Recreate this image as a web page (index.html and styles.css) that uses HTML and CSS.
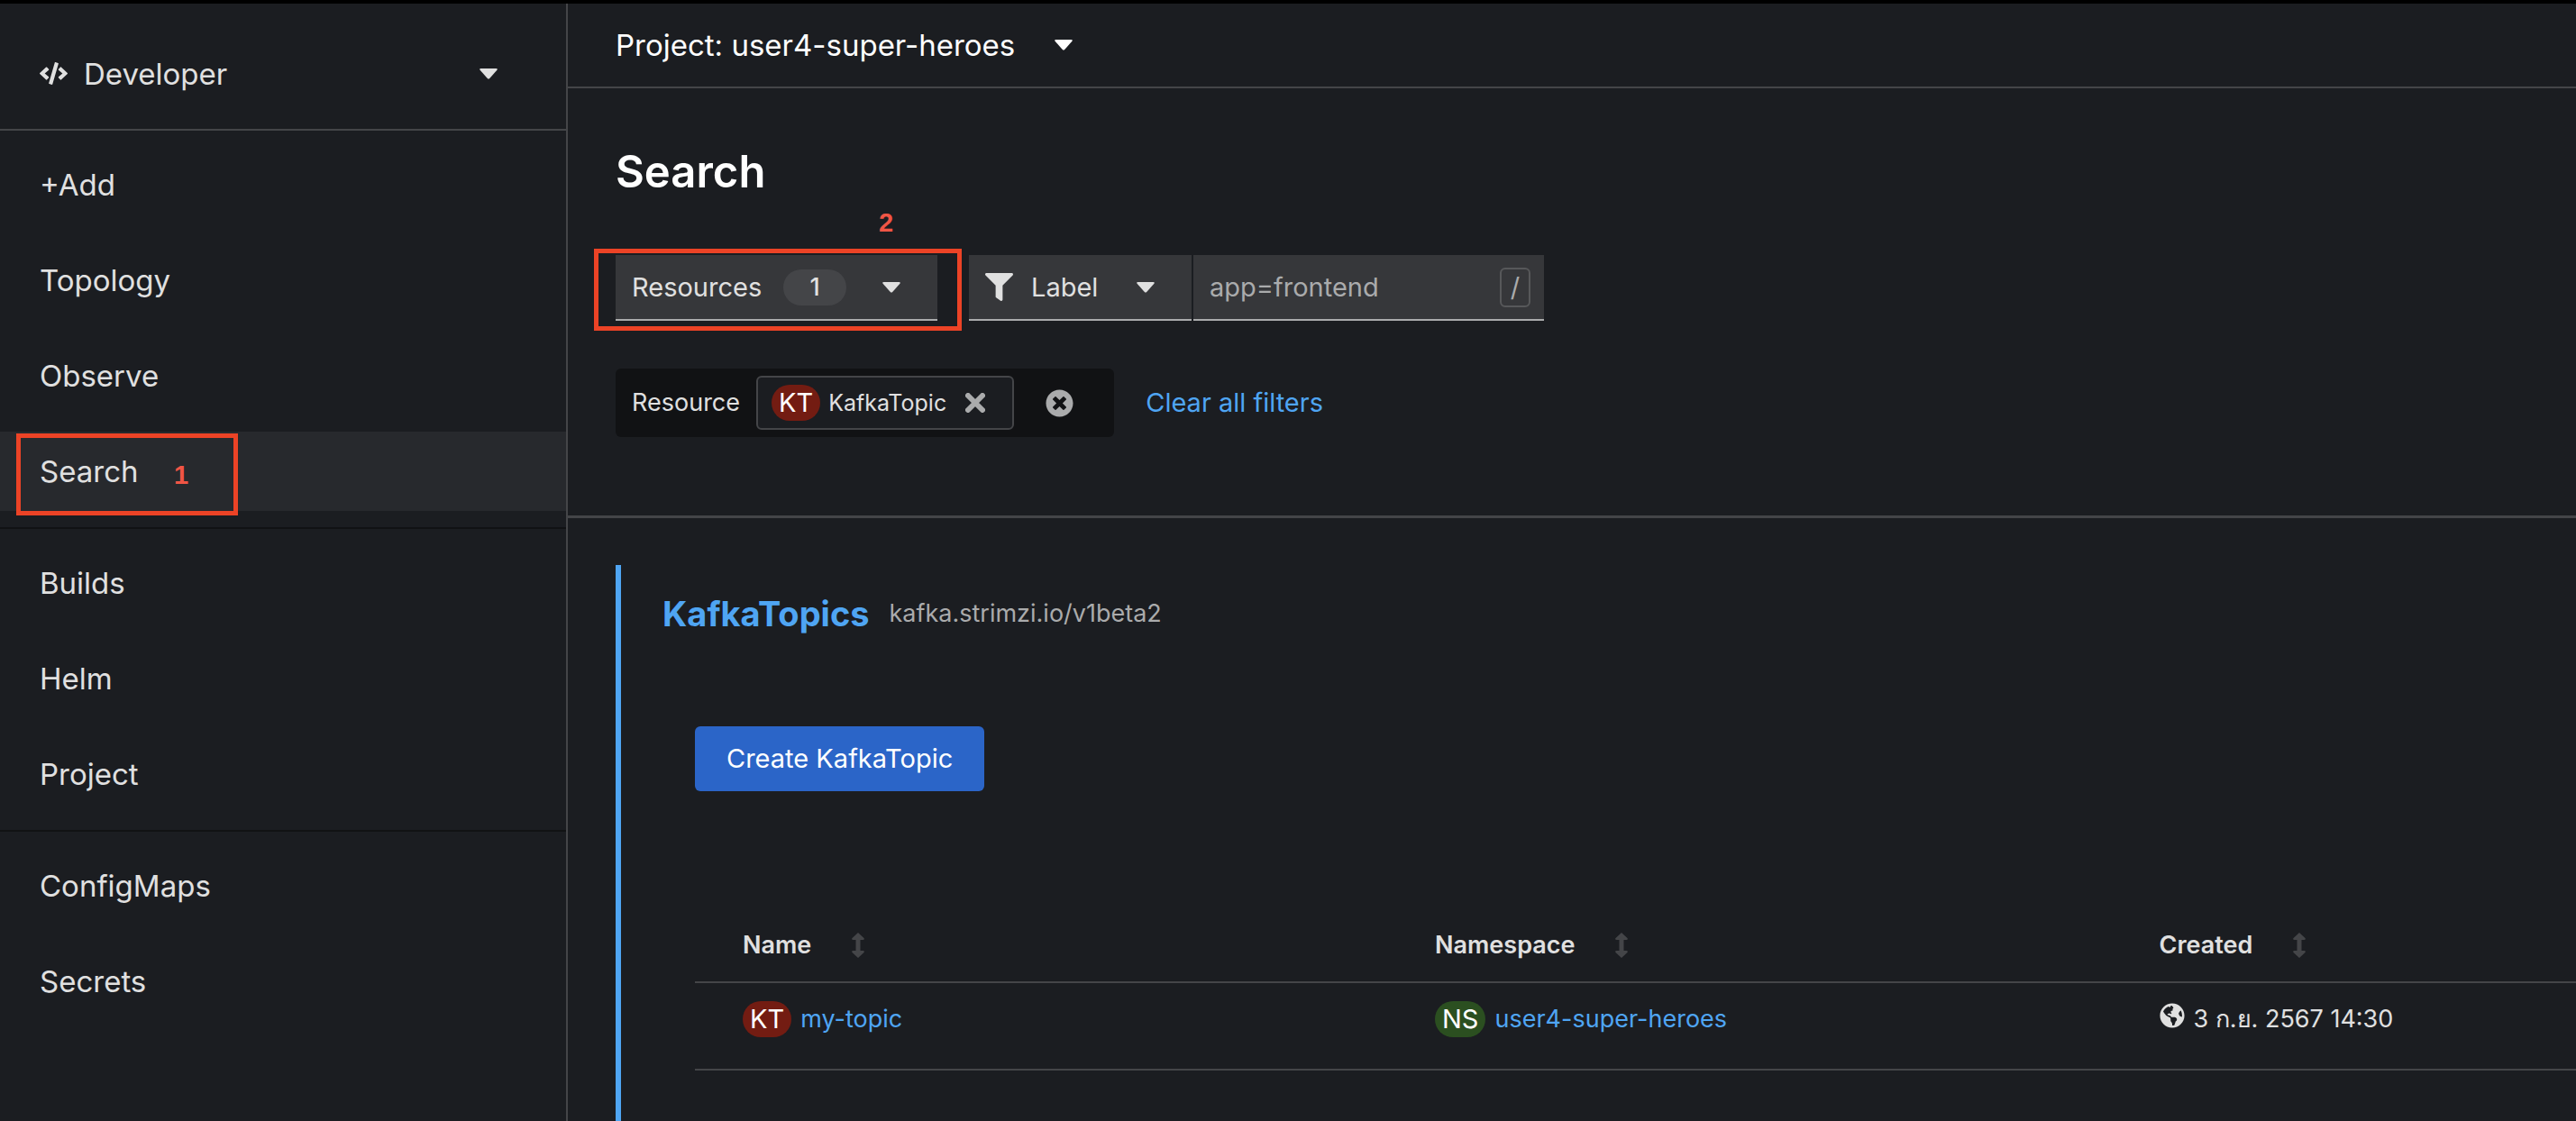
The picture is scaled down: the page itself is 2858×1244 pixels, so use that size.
FILE: index.html
```html
<!DOCTYPE html>
<html lang="en">
<head>
<meta charset="utf-8">
<title>Search</title>
<link rel="stylesheet" href="styles.css">
</head>
<body>
<div class="app">
  <aside class="sidebar">
    <button class="perspective" type="button">
      <svg class="icon-code" viewBox="0 0 640 512" aria-hidden="true"><path d="M278.900 511.500l-61-17.700c-6.400-1.800-10-8.500-8.200-14.900L346.200 8.700c1.800-6.400 8.500-10 14.900-8.200l61 17.700c6.400 1.800 10 8.500 8.200 14.900L293.800 503.300c-1.900 6.400-8.500 10.100-14.900 8.200zm-114-112.200l43.500-46.400c4.600-4.900 4.300-12.700-.8-17.200L117 256l90.600-79.700c5.100-4.500 5.500-12.300.8-17.200l-43.500-46.400c-4.500-4.800-12.100-5.100-17-.5L3.800 247.200c-5.100 4.700-5.100 12.800 0 17.500l144.100 135.100c4.900 4.600 12.500 4.400 17-.5zm327.200.6l144.100-135.100c5.100-4.700 5.100-12.800 0-17.500L492.100 112.100c-4.800-4.500-12.400-4.300-17 .5L431.600 159c-4.600 4.900-4.300 12.700.8 17.200L523 256l-90.600 79.700c-5.100 4.500-5.500 12.300-.8 17.200l43.500 46.400c4.500 4.900 12.100 5.100 17 .6z"/></svg>
      <span class="perspective-name">Developer</span>
      <svg class="caret" viewBox="0 0 20 12" aria-hidden="true"><path d="M1.500 0h17q2 0 .9 1.800L11.200 11q-1.200 1.200-2.400 0L.6 1.800Q-.5 0 1.500 0z"/></svg>
    </button>
    <nav>
      <ul class="nav-group">
        <li><a class="nav-link" href="#add">+Add</a></li>
        <li><a class="nav-link" href="#topology">Topology</a></li>
        <li><a class="nav-link" href="#observe">Observe</a></li>
        <li><a class="nav-link current" href="#search" aria-current="page">Search</a><span class="mark mark-nav"><span>1</span></span></li>
      </ul>
      <ul class="nav-group">
        <li><a class="nav-link" href="#builds">Builds</a></li>
        <li><a class="nav-link" href="#helm">Helm</a></li>
        <li><a class="nav-link" href="#project">Project</a></li>
      </ul>
      <ul class="nav-group">
        <li><a class="nav-link" href="#configmaps">ConfigMaps</a></li>
        <li><a class="nav-link" href="#secrets">Secrets</a></li>
      </ul>
    </nav>
  </aside>

  <main class="content">
    <div class="project-bar">
      <button class="project-toggle" type="button">Project: user4-super-heroes
        <svg class="caret" viewBox="0 0 20 12" aria-hidden="true"><path d="M1.500 0h17q2 0 .9 1.800L11.200 11q-1.200 1.200-2.400 0L.6 1.800Q-.5 0 1.500 0z"/></svg>
      </button>
    </div>

    <section class="search-head">
      <h1>Search</h1>
      <div class="toolbar">
        <div class="resource-filter">
          <button class="toggle toggle-resources" type="button">Resources
            <span class="count">1</span>
            <svg class="caret" viewBox="0 0 20 12" aria-hidden="true"><path d="M1.500 0h17q2 0 .9 1.800L11.200 11q-1.200 1.200-2.400 0L.6 1.800Q-.5 0 1.500 0z"/></svg>
          </button>
          <span class="mark mark-resources"><span>2</span></span>
        </div>
        <div class="label-filter">
          <button class="toggle toggle-label" type="button">
            <svg class="icon-filter" viewBox="0 0 512 512" aria-hidden="true"><path d="M488 0H24C2.700 0-8 25.900 7.100 41L192 225.900V432c0 7.800 3.800 15.200 10.200 19.700l80 56C298 518.700 320 507.500 320 488V225.900L505 41C520 25.900 509.300 0 488 0z"/></svg>
            Label
            <svg class="caret" viewBox="0 0 20 12" aria-hidden="true"><path d="M1.500 0h17q2 0 .9 1.800L11.200 11q-1.200 1.200-2.400 0L.6 1.800Q-.5 0 1.500 0z"/></svg>
          </button>
          <div class="field">
            <input type="text" placeholder="app=frontend" aria-label="Filter by label">
            <kbd>/</kbd>
          </div>
        </div>
      </div>
      <div class="chips">
        <div class="chip-group">
          <span class="chip-label">Resource</span>
          <span class="chip">
            <span class="badge badge-kt">KT</span>
            <span class="chip-text">KafkaTopic</span>
            <button class="icon-button" type="button" aria-label="Remove KafkaTopic">
              <svg class="icon-times" viewBox="0 0 22 22" aria-hidden="true"><path d="M3 3l16 16M19 3L3 19"/></svg>
            </button>
          </span>
          <button class="icon-button" type="button" aria-label="Remove resource filters">
            <svg class="icon-clear" viewBox="0 0 512 512" aria-hidden="true"><path d="M256 8C119 8 8 119 8 256s111 248 248 248 248-111 248-248S393 8 256 8zm121.600 313.100c4.700 4.700 4.700 12.300 0 17L338 377.600c-4.700 4.700-12.300 4.700-17 0L256 312l-65.100 65.600c-4.700 4.700-12.300 4.700-17 0L134.400 338c-4.700-4.700-4.700-12.300 0-17l65.600-65-65.600-65.100c-4.700-4.700-4.700-12.300 0-17l39.600-39.600c4.700-4.700 12.300-4.700 17 0l65 65.700 65.100-65.600c4.700-4.700 12.300-4.700 17 0l39.600 39.600c4.700 4.700 4.700 12.300 0 17L312 256l65.600 65.100z"/></svg>
          </button>
        </div>
        <button class="link-button" type="button">Clear all filters</button>
      </div>
    </section>

    <section class="results">
      <div class="result-group">
        <h2><a href="#kafkatopics">KafkaTopics</a><small>kafka.strimzi.io/v1beta2</small></h2>
        <div class="result-body">
          <button class="primary" type="button">Create KafkaTopic</button>
          <table>
            <thead>
              <tr>
                <th class="col-name" scope="col"><button class="sort" type="button">Name <svg class="icon-sort" viewBox="0 0 14 28" aria-hidden="true"><path d="M7 0l6.500 6q1 2-1 2H9.500v12h3q2 0 1 2L7 28 .5 22q-1-2 1-2h3V8h-3q-2 0-1-2z"/></svg></button></th>
                <th class="col-namespace" scope="col"><button class="sort" type="button">Namespace <svg class="icon-sort" viewBox="0 0 14 28" aria-hidden="true"><path d="M7 0l6.500 6q1 2-1 2H9.500v12h3q2 0 1 2L7 28 .5 22q-1-2 1-2h3V8h-3q-2 0-1-2z"/></svg></button></th>
                <th scope="col"><button class="sort" type="button">Created <svg class="icon-sort" viewBox="0 0 14 28" aria-hidden="true"><path d="M7 0l6.500 6q1 2-1 2H9.500v12h3q2 0 1 2L7 28 .5 22q-1-2 1-2h3V8h-3q-2 0-1-2z"/></svg></button></th>
              </tr>
            </thead>
            <tbody>
              <tr>
                <td><div class="cell"><span class="badge badge-kt">KT</span><a href="#my-topic">my-topic</a></div></td>
                <td><div class="cell"><span class="badge badge-ns">NS</span><a href="#user4-super-heroes">user4-super-heroes</a></div></td>
                <td><div class="cell"><svg class="icon-globe" viewBox="0 0 496 512" aria-hidden="true"><path d="M248 8C111 8 0 119 0 256s111 248 248 248 248-111 248-248S385 8 248 8zm82.300 357.600c-3.900 3.900-8 8-11.300 11.400-3 3-5.100 6.700-6.200 10.700-1.500 5.700-2.700 11.400-4.800 16.900l-17.300 46.700c-13.700 3-28 4.700-42.700 4.700v-27.400c1.700-12.600-7.600-36.200-22.600-51.200-6-6-9.400-14.100-9.400-22.600v-32c0-11.600-6.300-22.300-16.500-28-14.400-8-34.900-19.100-48.900-26.200-11.500-5.800-22.200-13.200-31.700-21.800l-.8-.7a114.800 114.800 0 0 1-18-20.700c-9.400-13.700-24.600-36.400-34.500-51.100 20.500-45.500 57.400-82 103.200-101.900l24 12C203.500 89.700 216 82 216 70.100v-11.300c8-1.300 16.100-2.100 24.400-2.400l28.300 28.300c6.200 6.200 6.200 16.400 0 22.600L264 112l-10.300 10.300c-3.100 3.100-3.100 8.200 0 11.300l4.700 4.700c3.100 3.100 3.100 8.200 0 11.300l-8 8c-1.500 1.500-3.500 2.300-5.700 2.300h-9c-2.100 0-4.100.8-5.600 2.300l-9.900 9.700c-2.500 2.400-3.100 6.200-1.600 9.300l15.600 31.200c2.700 5.300-1.200 11.600-7.200 11.600h-5.600c-1.900 0-3.800-.7-5.200-2l-9.300-8.100a16 16 0 0 0-15.600-3.100l-31.200 10.400a11.900 11.900 0 0 0-8.200 11.300c0 4.500 2.500 8.700 6.600 10.700l11.100 5.500c9.400 4.700 19.800 7.200 30.300 7.200s22.600 27.300 32 32h66.800c8.500 0 16.600 3.400 22.600 9.400l13.700 13.700c5.700 5.700 8.900 13.500 8.900 21.600 0 12.500-5 24.500-13.800 33zM417 274.300c-5.800-1.500-10.800-5-14.200-9.900l-18-27c-8.100-12.100-8.100-28 0-40.100l19.600-29.400c2.300-3.500 5.500-6.300 9.300-8.100l12.900-6.500C440.200 184.200 448 219.200 448 256c0 8.800-.6 17.400-1.400 26z"/></svg><time datetime="2024-09-03T14:30">3 ก.ย. 2567 14:30</time></div></td>
              </tr>
            </tbody>
          </table>
        </div>
      </div>
    </section>
  </main>
</div>
</body>
</html>
```
FILE: styles.css
```css
* {
  box-sizing: border-box;
}

body {
  margin: 0;
  background: #1b1d21;
  color: #e0e0e0;
  font-family: Inter, "Noto Sans", sans-serif;
  font-size: 29px;
  line-height: 40px;
}

button,
input,
kbd {
  font: inherit;
  color: inherit;
}

button {
  border: 0;
  padding: 0;
  background: none;
  cursor: pointer;
}

a,
.link-button {
  color: #4fa5f3;
  text-decoration: none;
}

svg {
  display: block;
  flex: none;
  fill: currentColor;
}

.app {
  display: flex;
  min-height: 100vh;
  border-top: 4px solid #000;
}

.caret {
  width: 20px;
  height: 12px;
}

/* Sidebar */

.sidebar {
  flex: none;
  width: 630px;
  border-right: 2px solid #444548;
  font-size: 33px;
}

.perspective {
  display: flex;
  align-items: center;
  gap: 18px;
  width: 100%;
  height: 141px;
  padding: 16px 76px 0 44px;
  border-bottom: 2px solid #444548;
  text-align: left;
}

.perspective-name {
  flex: 1;
}

.icon-code {
  width: 31px;
  height: 25px;
}

.nav-group {
  margin: 0;
  padding: 16px 0 0;
  list-style: none;
}

.nav-group + .nav-group {
  border-top: 2px solid #111214;
}

.nav-group li {
  position: relative;
  margin-bottom: 18px;
}

.nav-link {
  display: flex;
  align-items: center;
  height: 88px;
  padding: 0 44px;
  color: inherit;
}

.nav-link.current {
  background: #27292d;
}

/* Numbered outlines laid over the steps to follow */

.mark {
  position: absolute;
  border: 5px solid #ec4326;
  color: #f05545;
  font: bold 29px/40px "Liberation Sans", sans-serif;
  pointer-events: none;
}

.mark span {
  position: absolute;
}

.mark-nav {
  top: 2px;
  left: 18px;
  width: 246px;
  height: 91px;
}

.mark-nav span {
  top: 21px;
  left: 170px;
}

.mark-resources {
  top: -7px;
  left: -24px;
  width: 408px;
  height: 91px;
}

.mark-resources span {
  top: -54px;
  left: 311px;
}

/* Main column */

.content {
  flex: 1;
  min-width: 0;
  display: flex;
  flex-direction: column;
}

.project-bar {
  height: 94px;
  padding: 0 53px;
  border-bottom: 2px solid #444548;
  color: #fff;
  font-size: 33px;
}

.project-toggle {
  display: flex;
  align-items: center;
  gap: 44px;
  height: 92px;
}

.search-head {
  padding: 62px 53px 87px;
  border-bottom: 3px solid #444548;
}

h1 {
  margin: 0 0 61px;
  color: #fff;
  font-size: 49px;
  font-weight: 600;
  line-height: 62px;
}

.toolbar {
  display: flex;
  gap: 35px;
}

.resource-filter {
  position: relative;
}

.label-filter {
  display: flex;
  gap: 2px;
}

.toggle,
.field {
  display: flex;
  align-items: center;
  height: 73px;
  border-bottom: 2px solid #aaabac;
  background: #36373a;
}

.toggle-resources {
  gap: 24px;
  width: 357px;
  padding: 0 41px 0 18px;
}

.toggle-resources .caret,
.toggle-label .caret {
  margin-left: auto;
}

.count {
  width: 70px;
  border-radius: 20px;
  background: #444548;
  font-size: 27px;
  font-weight: 500;
}

.toggle-label {
  gap: 20px;
  width: 247px;
  padding: 0 41px 0 18px;
}

.icon-filter {
  width: 31px;
  height: 31px;
}

.field {
  width: 389px;
  padding: 0 15px 0 18px;
}

.field input {
  flex: 1;
  min-width: 0;
  padding: 0;
  border: 0;
  outline: 0;
  background: none;
}

.field input::placeholder {
  color: #aaabac;
  opacity: 1;
}

kbd {
  width: 34px;
  border: 2px solid #57585a;
  border-radius: 6px;
  color: #aaabac;
  text-align: center;
}

.chips {
  display: flex;
  align-items: center;
  gap: 35px;
  margin-top: 53px;
}

.chip-group {
  display: flex;
  align-items: center;
  gap: 18px;
  height: 76px;
  padding: 0 45px 0 18px;
  border-radius: 6px;
  background: #111214;
}

.chip-label {
  font-size: 27px;
}

.chip {
  display: flex;
  align-items: center;
  height: 60px;
  margin-right: 17px;
  padding: 0 30px 0 15px;
  border: 2px solid #444548;
  border-radius: 6px;
  background: #1b1d21;
}

.chip-text {
  margin: 0 21px 0 9px;
  font-size: 25px;
}

.icon-button {
  color: #aaabac;
}

.icon-times {
  width: 22px;
  height: 22px;
  fill: none;
  stroke: currentColor;
  stroke-width: 6;
  stroke-linecap: round;
}

.icon-clear {
  width: 31px;
  height: 31px;
}

.badge {
  padding: 0 8px;
  border-radius: 20px;
  color: #fff;
}

.badge-kt {
  background: #731c12;
}

.badge-ns {
  background: #2b4f20;
}

/* Results */

.results {
  flex: 1;
  display: flex;
  padding: 52px 0 0 53px;
}

.result-group {
  flex: 1;
  padding: 34px 0 0 46px;
  border-left: 6px solid #4fa5f3;
}

h2 {
  display: flex;
  align-items: center;
  gap: 22px;
  margin: 0;
  font-size: 38px;
  font-weight: 700;
}

h2 small {
  color: #aaabac;
  font-size: 27px;
  font-weight: 400;
}

.result-body {
  padding: 105px 0 0 36px;
}

.primary {
  height: 72px;
  padding: 0 35px;
  border-radius: 6px;
  background: #2b65c8;
  color: #fff;
}

table {
  width: 100%;
  margin-top: 130px;
  border-collapse: collapse;
  table-layout: fixed;
  font-size: 27px;
}

th,
td {
  padding: 0 0 0 53px;
  border-bottom: 2px solid #444548;
  text-align: left;
}

.col-name {
  width: 36.8%;
}

.col-namespace {
  width: 38.5%;
}

th {
  height: 82px;
}

td {
  height: 97px;
  padding-bottom: 16px;
}

.sort {
  display: flex;
  align-items: center;
  gap: 45px;
  font-weight: 600;
}

.icon-sort {
  width: 14px;
  height: 28px;
  color: #444548;
}

.cell {
  display: flex;
  align-items: center;
  gap: 10px;
}

.cell .badge {
  font-size: 29px;
}

.icon-globe {
  width: 28px;
  height: 28px;
  margin-bottom: 8px;
}
```
